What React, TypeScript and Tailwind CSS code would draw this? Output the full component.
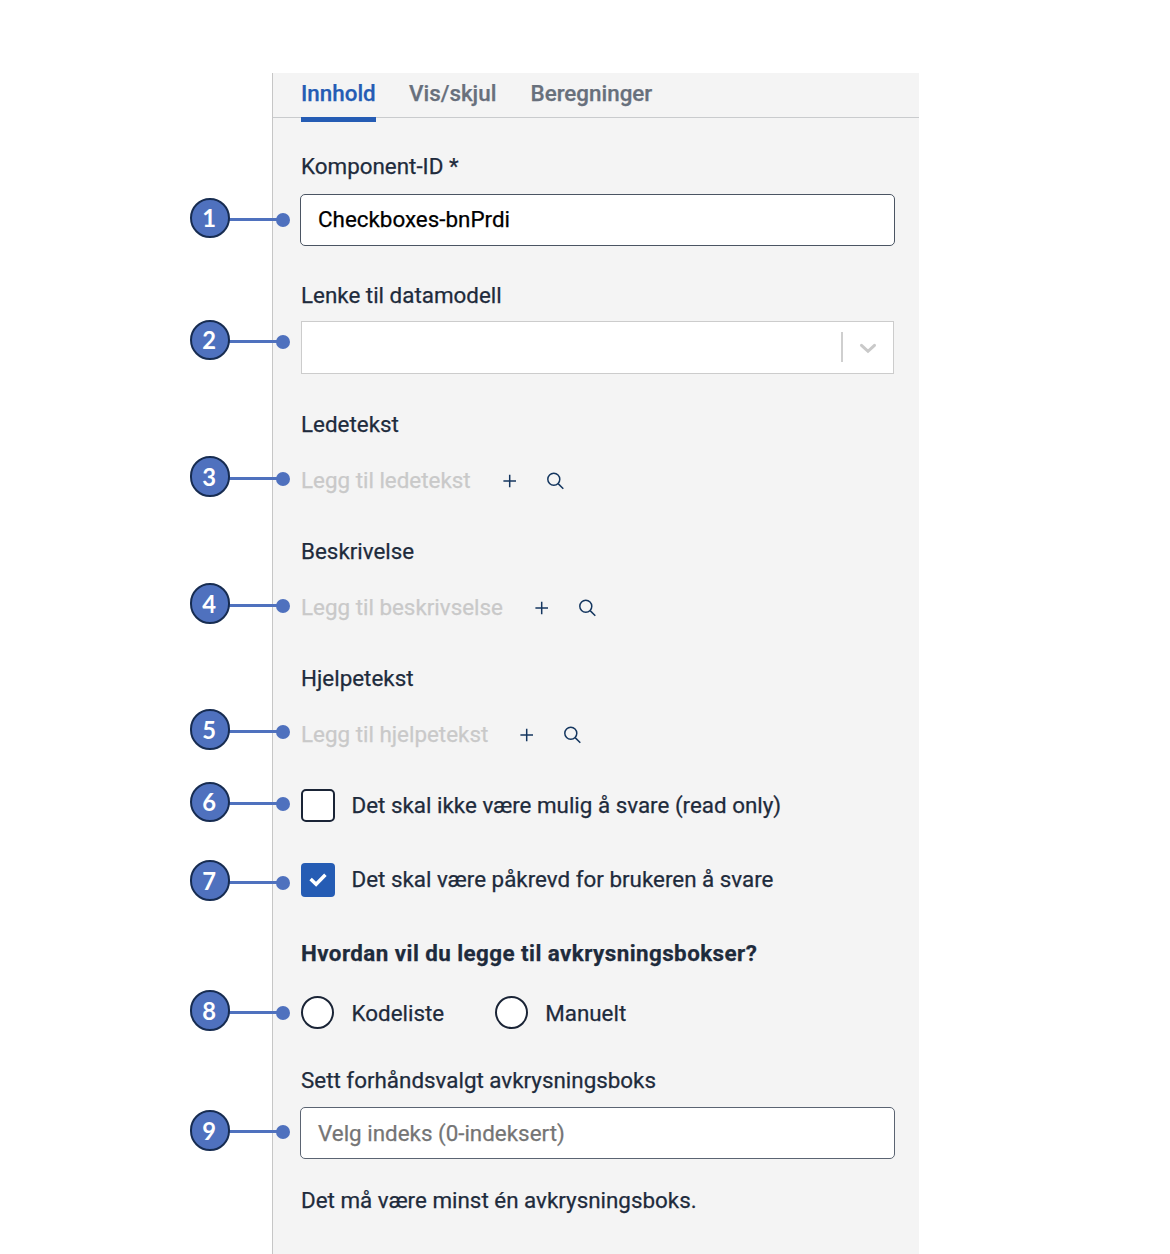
import type { ReactNode } from 'react';

type CalloutProps = { n: number; top: string; lineTop?: string; size?: string };

/** Numbered marker that reaches over the panel's left edge. */
function Callout({ n, top, lineTop = 'top-[20px]', size = 'h-[41px] pb-px' }: CalloutProps) {
  return (
    <div className={`absolute -left-[111px] h-[41px] w-[100px] ${top}`}>
      <div className={`absolute left-[39px] h-[3px] w-[52px] bg-[#4f71be] ${lineTop}`}>
        <span className="absolute -top-[5.5px] left-[47px] size-[14px] rounded-full bg-[#4f71be]" />
      </div>
      <div
        className={`relative flex w-10 items-center justify-center rounded-full border-2 border-[#172c51] bg-[#4f71be] pr-px font-['Lato',sans-serif] text-[25px] leading-[34px] font-bold text-white [-webkit-text-stroke:0px] ${size}`}
      >
        <span className="scale-x-95">{n}</span>
      </div>
    </div>
  );
}

function Label({ children, className = '' }: { children: ReactNode; className?: string }) {
  return <div className={`h-7 leading-7 whitespace-nowrap ${className}`}>{children}</div>;
}

function PlusIcon() {
  return (
    <svg className="mt-px size-[14px] shrink-0" viewBox="0 0 14 14" fill="none" stroke="#14365f" strokeWidth="1.5">
      <path d="M6.700 .7v12.600M.4 7h12.600" />
    </svg>
  );
}

function SearchIcon() {
  return (
    <svg className="mt-[2px] size-[18px] shrink-0" viewBox="0 0 18 18" fill="none" stroke="#14365f" strokeWidth="1.5">
      <circle cx="6.800" cy="7.300" r="6" />
      <path d="M11.100 11.600l5.200 5.200" />
    </svg>
  );
}

type TextResourceProps = {
  label: string;
  action: string;
  width: string;
  height: string;
  callout: ReactNode;
};

function TextResource({ label, action, width, height, callout }: TextResourceProps) {
  return (
    <section className={`relative ${height}`}>
      {callout}
      <Label>{label}</Label>
      <div className="mt-7 flex h-7 items-center">
        <span className={`leading-7 whitespace-nowrap text-[#c9c9c9] ${width}`}>{action}</span>
        <PlusIcon />
        <span className="ml-[30px] flex">
          <SearchIcon />
        </span>
      </div>
    </section>
  );
}

function Checkbox({ label, checked = false }: { label: string; checked?: boolean }) {
  return (
    <div className="flex h-[33px] items-center gap-[17px]">
      <span
        className={
          checked
            ? 'mt-px flex h-[34px] w-[33.5px] shrink-0 items-center justify-center rounded-[4px] bg-[#255cb4]'
            : 'h-[33px] w-[33.5px] shrink-0 rounded-[5px] border-2 border-[#1a2436] bg-white'
        }
      >
        {checked && (
          <svg className="size-[18px]" viewBox="0 0 18 18" fill="none" stroke="white" strokeWidth="3.5">
            <path d="M1.600 8l5.500 5.200L16.400 3.700" />
          </svg>
        )}
      </span>
      <span className="-mt-px leading-7 whitespace-nowrap">{label}</span>
    </div>
  );
}

function Radio({ label }: { label: string }) {
  return (
    <div className="flex items-center gap-[17px]">
      <span className="size-[33px] shrink-0 rounded-full border-2 border-[#1a2436] bg-white" />
      <span className="ml-[0.5px] leading-7 whitespace-nowrap">{label}</span>
    </div>
  );
}

export default function App() {
  return (
    <div className="h-[1254px] overflow-hidden bg-white pt-[73px] pl-[272px] font-['Roboto',sans-serif] text-[22.4px] text-[#1e2b3c] [-webkit-text-stroke:0.25px]">
      <div className="h-[1181px] w-[647px] border-l border-[#c6c6c6] bg-[#f4f4f4]">
        <nav className="flex h-[45px] gap-[33px] border-b border-[#c9cbcd] pl-7 font-medium text-[#68707c]">
          <div className="h-[49px] w-[75px] border-b-[5px] border-[#255cb4] pt-[6px] leading-7 text-[#255cb4]">
            Innhold
          </div>
          <div className="w-[88.5px] pt-[6px] leading-7">Vis/skjul</div>
          <div className="pt-[6px] leading-7">Beregninger</div>
        </nav>

        <div className="pt-[34px] pl-7">
          <section className="relative h-[129px]">
            <Callout n={1} top="top-[46px]" size="h-10 pb-[2px]" />
            <Label>Komponent-ID *</Label>
            <div className="mt-[14px] -ml-px flex h-[52px] w-[595px] items-center rounded-[5px] border border-[#4b5563] bg-white pb-[2px] pl-[17px] leading-7 text-black">
              Checkboxes-bnPrdi
            </div>
          </section>

          <section className="relative h-[129px]">
            <Callout n={2} top="top-[39px]" size="h-10 pb-[2px]" />
            <Label>Lenke til datamodell</Label>
            <div className="mt-[12px] flex h-[53px] w-[593px] items-center justify-end border border-[#cccccc] bg-white">
              <span className="mb-px h-[30px] w-[2px] bg-[#cfcfcf]" />
              <svg className="mt-px mr-[16px] ml-[16px] h-[11px] w-[18px]" viewBox="0 0 18 11" fill="none" stroke="#c9c9c9" strokeWidth="3" strokeLinecap="round">
                <path d="M2.500 2.300L9 8.300l6.500-6" />
              </svg>
            </div>
          </section>

          <TextResource
            label="Ledetekst"
            action="Legg til ledetekst"
            width="w-[202px]"
            height="h-[127px]"
            callout={<Callout n={3} top="top-[46px]" lineTop="top-[21px]" />}
          />
          <TextResource
            label="Beskrivelse"
            action="Legg til beskrivselse"
            width="w-[234px]"
            height="h-[127px]"
            callout={<Callout n={4} top="top-[46px]" lineTop="top-[21px]" />}
          />
          <TextResource
            label="Hjelpetekst"
            action="Legg til hjelpetekst"
            width="w-[219px]"
            height="h-[125px]"
            callout={<Callout n={5} top="top-[45px]" lineTop="top-[21px]" />}
          />

          <section className="relative h-[74px]">
            <Callout n={6} top="-top-[7px]" size="h-10 pb-[2px]" />
            <Checkbox label="Det skal ikke være mulig å svare (read only)" />
          </section>
          <section className="relative h-[76px]">
            <Callout n={7} top="-top-[3px]" lineTop="top-[21px]" />
            <Checkbox label="Det skal være påkrevd for brukeren å svare" checked />
          </section>

          <section className="relative h-[127px]">
            <Callout n={8} top="top-[51px]" lineTop="top-[21px]" />
            <Label className="font-bold tracking-[0.43px]">Hvordan vil du legge til avkrysningsbokser?</Label>
            <div className="mt-[29px] flex gap-[50.5px]">
              <Radio label="Kodeliste" />
              <Radio label="Manuelt" />
            </div>
          </section>

          <section className="relative">
            <Callout n={9} top="top-[44px]" />
            <Label>Sett forhåndsvalgt avkrysningsboks</Label>
            <div className="mt-[13px] -ml-px flex h-[52px] w-[595px] items-center rounded-[5px] border border-[#5b6472] bg-white pl-[17px] leading-7 text-[#757575]">
              Velg indeks (0-indeksert)
            </div>
            <Label className="mt-[27px]">Det må være minst én avkrysningsboks.</Label>
          </section>
        </div>
      </div>
    </div>
  );
}
